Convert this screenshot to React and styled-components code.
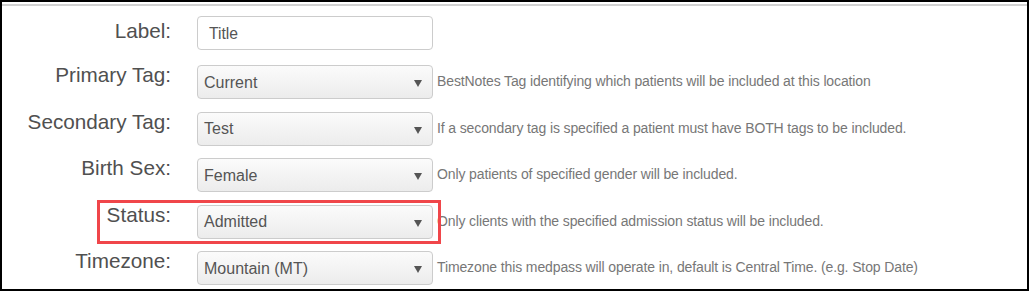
import React from "react";
import styled, { createGlobalStyle } from "styled-components";

const Global = createGlobalStyle`
  html, body { margin: 0; padding: 0; background: #fff; }
  body { font-family: "Liberation Sans", Arial, sans-serif; }
  * { box-sizing: border-box; }
`;

const Frame = styled.div`
  width: 1029px;
  height: 291px;
  border: 2px solid #000;
  padding-top: 2px;
  background: #fff;
  overflow: hidden;
`;

const Divider = styled.div`
  height: 2px;
  background: #d2d2d2;
`;

const Form = styled.div`
  display: flex;
  flex-direction: column;
  padding-top: 10px;
`;

const Row = styled.div`
  position: relative;
  display: grid;
  grid-template-columns: 195px 236px auto;
  align-items: center;
  height: 34px;
  margin-bottom: ${(p) => p.$gap}px;
`;

const Label = styled.div`
  align-self: start;
  padding-top: ${(p) => p.$top}px;
  padding-right: 26px;
  text-align: right;
  font-size: 20.7px;
  line-height: 20px;
  color: #505050;
  white-space: nowrap;
`;

const TextInput = styled.div`
  height: 34px;
  border: 1px solid #ccc;
  border-radius: 4px;
  background: #fff;
  padding: 1px 11px 0;
  display: flex;
  align-items: center;
  font-size: 15.7px;
  color: #555;
`;

const Select = styled.div`
  height: 34px;
  border: 1px solid #ccc;
  border-radius: 4px;
  background: linear-gradient(#fbfbfb, #ececec);
  padding: 1px 10px 0 6px;
  display: flex;
  align-items: center;
  justify-content: space-between;
  font-size: 16px;
  color: #555;
`;

const Arrow = styled.span`
  width: 0;
  height: 0;
  margin-top: 2px;
  border-left: 4px solid transparent;
  border-right: 4px solid transparent;
  border-top: 7px solid #555;
`;

const Help = styled.div`
  margin-left: 4px;
  margin-top: -2px;
  font-size: 14px;
  letter-spacing: -0.12px;
  line-height: 20px;
  color: #777;
  white-space: nowrap;
`;

const Highlight = styled.div`
  position: absolute;
  left: 95px;
  top: -5px;
  width: 344px;
  height: 44px;
  border: 3px solid #f0464a;
  pointer-events: none;
`;

const data = [
  { label: "Primary Tag:", value: "Current", help: "BestNotes Tag identifying which patients will be included at this location" },
  { label: "Secondary Tag:", value: "Test", help: "If a secondary tag is specified a patient must have BOTH tags to be included." },
  { label: "Birth Sex:", value: "Female", help: "Only patients of specified gender will be included." },
  { label: "Status:", value: "Admitted", help: "Only clients with the specified admission status will be included.", highlight: true },
  { label: "Timezone:", value: "Mountain (MT)", help: "Timezone this medpass will operate in, default is Central Time. (e.g. Stop Date)" },
];

export default function App() {
  return (
    <>
      <Global />
      <Frame>
        <Divider />
        <Form>
          <Row $gap={15}>
            <Label $top={5}>Label:</Label>
            <TextInput>Title</TextInput>
          </Row>
          {data.map((r) => (
            <Row key={r.label} $gap={12.5}>
              <Label $top={0}>{r.label}</Label>
              <Select>
                <span>{r.value}</span>
                <Arrow />
              </Select>
              <Help>{r.help}</Help>
              {r.highlight && <Highlight />}
            </Row>
          ))}
        </Form>
      </Frame>
    </>
  );
}
